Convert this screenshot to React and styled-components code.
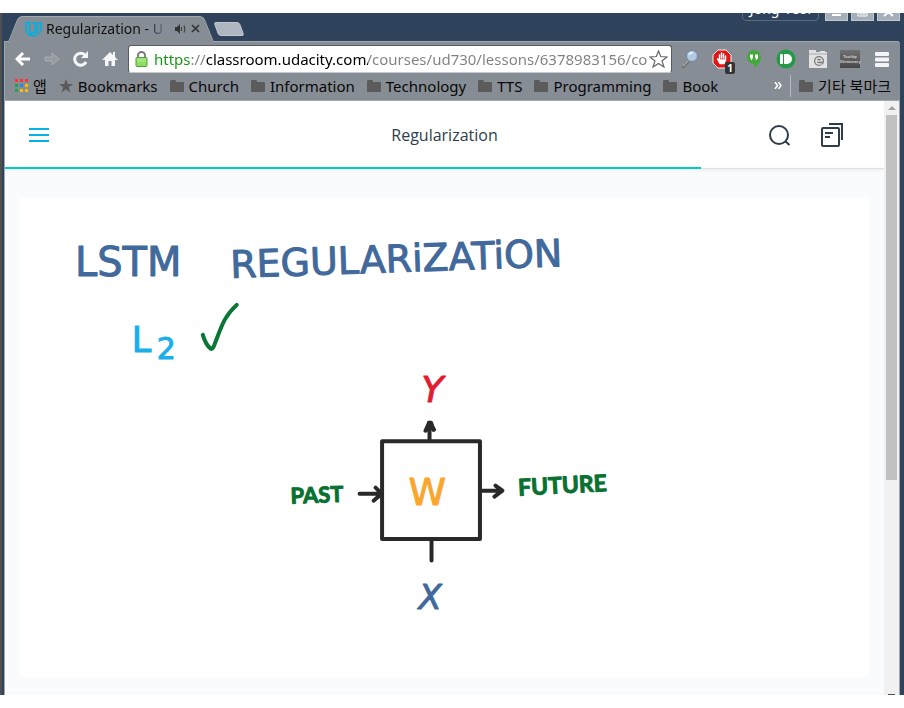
import React from "react";
import styled, { createGlobalStyle, css } from "styled-components";

const uiFont = `"Noto Sans", "Noto Sans CJK KR", sans-serif`;

const GlobalStyle = createGlobalStyle`
  * { box-sizing: border-box; }
  html, body, #root { height: 100%; }
  body { margin: 0; background: #fff; font-family: ${uiFont}; overflow: hidden; }
  button { font: inherit; border: 0; padding: 0; background: none; color: inherit; cursor: pointer; }
  svg { display: block; flex: none; }
`;

const Screen = styled.div`
  height: 100vh;
  padding: 13px 0;
  display: flex;
  flex-direction: column;
`;

const BrowserWindow = styled.div`
  flex: 1;
  min-height: 0;
  display: flex;
  flex-direction: column;
  background: #30435d;
  border-left: 2px solid #4f5052;
  padding: 0 4px 0 2px;
`;

const TitleBar = styled.header`
  height: 28px;
  display: flex;
  align-items: flex-end;
  padding-left: 6px;
`;

const Tab = styled.div`
  position: relative;
  width: 202px;
  height: 25px;
  padding: 0 12px 0 15px;
  display: flex;
  align-items: center;
  isolation: isolate;
  &::before,
  &::after {
    content: "";
    position: absolute;
    z-index: -1;
    top: 0;
    bottom: -1px;
    background: #878d94;
    border-top: 1px solid #a4a9af;
  }
  &::before {
    left: 3px;
    right: 50%;
    transform: skewX(-22deg);
    border-left: 1px solid #a4a9af;
    border-top-left-radius: 5px;
  }
  &::after {
    left: 45%;
    right: 3px;
    transform: skewX(22deg);
    border-right: 1px solid #a4a9af;
    border-top-right-radius: 5px;
  }
`;

const TabTitle = styled.span`
  flex: 1;
  margin-left: 4px;
  white-space: nowrap;
  font-size: 14px;
  line-height: 22px;
  color: #111;
  mask-image: linear-gradient(to right, #000 80%, transparent);
`;

const TabButton = styled.button`
  margin-left: 5px;
`;

const NewTab = styled.button`
  width: 26px;
  height: 14px;
  margin: 0 auto 5px 4px;
  background: #aeb6bf;
  border: 1px solid #c3c9d0;
  border-radius: 3px;
  transform: skewX(20deg);
`;

const WindowControls = styled.div`
  align-self: flex-start;
  height: 8px;
  overflow: hidden;
  display: flex;
  align-items: flex-end;
  gap: 3px;
`;

const UserButton = styled.button`
  width: 77px;
  height: 24px;
  margin-right: 3px;
  border: 1px solid #5b6a80;
  border-radius: 4px;
  color: #fff;
  font-size: 14px;
  line-height: 22px;
  white-space: nowrap;
`;

const WindowButton = styled.button`
  width: 23px;
  height: 20px;
  display: flex;
  align-items: flex-end;
  justify-content: center;
  background: #a5afba;
  border: 1px solid #c1c8cf;
`;

const Toolbar = styled.div`
  background: #878d94;
  border-top: 1px solid #a1a6ac;
  border-left: 1px solid #a1a6ac;
  border-top-right-radius: 3px;
`;

const NavRow = styled.div`
  height: 32px;
  display: flex;
  align-items: center;
  padding: 2px 7px 0 8px;
`;

const NavButton = styled.button`
  width: 20px;
  height: 20px;
  margin-right: 9px;
  display: grid;
  place-items: center;
`;

const AddressBar = styled.form`
  flex: 1;
  min-width: 0;
  height: 28px;
  margin-left: -1px;
  padding: 0 3px 0 6px;
  display: flex;
  align-items: center;
  background: #fff;
  border: 1px solid #555c64;
  border-bottom-color: #c6cacd;
  border-radius: 3px;
`;

const AddressInput = styled.input`
  flex: 1;
  min-width: 0;
  height: 24px;
  margin-left: 6px;
  padding: 0;
  border: 0;
  outline: 0;
  font: 15px/24px ${uiFont};
  color: transparent;
  background: linear-gradient(
    to right,
    #149414 0 37px,
    #808080 37px 52px,
    #000 52px 214px,
    #808080 214px
  );
  background-clip: text;
  -webkit-background-clip: text;
`;

const Extensions = styled.div`
  display: flex;
  gap: 10px;
  margin-left: 7px;
`;

const ExtensionButton = styled.button`
  position: relative;
  width: 22px;
  height: 22px;
  display: grid;
  place-items: center;
`;

const Badge = styled.span`
  position: absolute;
  right: -2px;
  bottom: -4px;
  width: 10px;
  height: 12px;
  border-radius: 2px;
  background: #333;
  color: #fff;
  font-size: 10px;
  font-weight: 700;
  line-height: 12px;
  text-align: center;
`;

const DictionaryLabel = styled.span`
  width: 20px;
  height: 18px;
  background: linear-gradient(#707070, #484848);
  color: #ccc;
  font-size: 4px;
  font-weight: 700;
  line-height: 5px;
  text-align: center;
  padding-top: 4px;
`;

const BookmarksBar = styled.nav`
  height: 26px;
  display: flex;
  align-items: center;
  gap: 12px;
  padding: 0 9px 3px 10px;
  color: #080808;
  font-size: 15px;
  line-height: 22px;
`;

const Bookmark = styled.a`
  display: flex;
  align-items: center;
  gap: 5px;
  color: inherit;
  text-decoration: none;
  white-space: nowrap;
  ${(p) => p.$trailing && css`
    height: 22px;
    padding-left: 8px;
    margin-left: -4px;
    border-left: 1px solid #b5babf;
  `}
`;

const MoreButton = styled.button`
  margin-left: auto;
`;

const Viewport = styled.div`
  flex: 1;
  min-height: 0;
  display: flex;
  border: solid #a5a7aa;
  border-width: 1px 1px 0;
`;

const Page = styled.main`
  flex: 1;
  min-width: 0;
  overflow: hidden;
  background: #fafbfd;
`;

const LessonHeader = styled.header`
  height: 66px;
  display: grid;
  grid-template-columns: 1fr auto 1fr;
  align-items: center;
  padding: 2px 24px 0;
  background: #fff;
`;

const LessonTitle = styled.h1`
  margin: 0;
  font: 400 16px/24px "Open Sans", sans-serif;
  color: #2e3d49;
`;

const MenuButton = styled.button`
  width: 20px;
  height: 14px;
  border: solid #02b3e4;
  border-width: 2px 0;
  display: flex;
  align-items: center;
  &::before {
    content: "";
    width: 100%;
    height: 2px;
    background: #02b3e4;
  }
`;

const HeaderActions = styled.div`
  justify-self: end;
  display: flex;
  gap: 29px;
  margin-right: 16px;
`;

const Progress = styled.div`
  height: 2px;
  background: linear-gradient(#fff 50%, #dbe2e8 50%);
  box-shadow: 0 1px 3px rgba(46, 61, 73, 0.12);
`;

const ProgressFill = styled.div`
  width: ${(p) => p.$value}%;
  height: 100%;
  background: #02ccba;
`;

const Slide = styled.section`
  margin: 29px 15px 17px;
  background: #fff;
  border-radius: 2px;
`;

const Sketch = styled.svg`
  width: 100%;
  height: auto;
  text {
    font-family: "DejaVu Sans", sans-serif;
    fill: currentColor;
    stroke: currentColor;
    stroke-width: 1;
    stroke-linejoin: round;
  }
`;

const SketchLabels = styled.g`
  color: #08712f;
  font-weight: 700;
  text { font-family: Lato, sans-serif; }
`;

const Scrollbar = styled.div`
  width: 15px;
  flex: none;
  display: flex;
  flex-direction: column;
  align-items: center;
  background: #f1f1f1;
  overflow: hidden;
`;

const ScrollArrow = styled.button`
  height: 14px;
  flex: none;
  display: grid;
  place-items: center;
`;

const ScrollTrack = styled.div`
  flex: 1;
  width: 11px;
`;

const ScrollThumb = styled.div`
  height: 63%;
  background: #c1c1c1;
`;

const ScrollEnd = styled.div`
  width: 7px;
  height: 1px;
  background: #505050;
`;

const Folder = () => (
  <svg width="14" height="12" viewBox="0 0 14 12" fill="#5b5b5b">
    <path d="M0 2Q0 0 1 0H5Q6 0 6 2H13Q14 2 14 3V11Q14 12 13 12H1Q0 12 0 11Z" />
  </svg>
);

const Star = () => (
  <svg width="14" height="14" viewBox="0 0 14 14" fill="#5b5b5b">
    <path d="M7 0L8.8 5H14L9.8 8.2L11.4 13.4L7 10.3L2.6 13.4L4.2 8.2L0 5H5.2Z" />
  </svg>
);

const appColors = ["#f33", "#f33", "#f33", "#2a9d4e", "#2188f5", "#fb0", "#2a9d4e", "#fb0", "#fb0"];
const Apps = () => (
  <svg width="13" height="13" viewBox="0 0 13 13">
    {appColors.map((color, i) => (
      <rect key={i} x={(i % 3) * 5} y={Math.floor(i / 3) * 5} width="3" height="3" fill={color} />
    ))}
  </svg>
);

const Udacity = () => (
  <svg width="17" height="16" viewBox="0 0 17 16" fill="none" stroke="#04afe1" strokeWidth="1.7" strokeLinejoin="round">
    <path d="M1 2L4.5 1V8.5Q4.5 11 7 12Q5.500 14.500 4 13.500Q1 11.500 1 8Z" />
    <path d="M16 1.500L12.500 2.500V8.500Q12 12 7 12Q6 14 5 14.500Q10 16 13.500 12.500Q16 10 16 7ZM7.500 2.500L10 1.500V9Q10 11 8 12" />
  </svg>
);

const bookmarks = ["Church", "Information", "Technology", "TTS", "Programming", "Book"];

function Diagram() {
  return (
    <Sketch viewBox="20 198 850 480" role="img" aria-label="LSTM regularization diagram">
      <g color="#41699c">
        <text x="75" y="276" fontSize="40">LSTM</text>
        <text x="231" y="278" fontSize="38" transform="rotate(-2 231 278)">REGULARiZATiON</text>
        <text x="419" y="609" fontSize="34" fontStyle="italic">X</text>
      </g>
      <g color="#1aaeea">
        <text x="132" y="352" fontSize="35">L</text>
        <text x="157" y="359" fontSize="30">2</text>
      </g>
      <text x="422" y="402" fontSize="36" color="#e31b32" fontStyle="italic">Y</text>
      <text x="409" y="505" fontSize="38" color="#faa62d">W</text>
      <SketchLabels>
        <text x="291" y="504" fontSize="22" transform="rotate(-2 291 504)">PAST</text>
        <text x="519" y="496" fontSize="23" transform="rotate(-3 519 496)">FUTURE</text>
      </SketchLabels>
      <path d="M203 335Q206 345 211 349Q213 350 215 344C222 326 224 317 237 305" fill="none" stroke="#087634" strokeWidth="4" strokeLinecap="round" strokeLinejoin="round" />
      <g fill="none" stroke="#292929" strokeWidth="4" strokeLinecap="round" strokeLinejoin="round">
        <path d="M382.500 441.500H480.500V539.500H382.500Z" />
        <path d="M430 440V424M426 431L429.500 423L434.500 430M432 540V561" />
        <path d="M429.500 423H431.500L434 430M360 494H382M376 488L382 494L374 501M482 491H502M496 486L503 491L495 497" />
      </g>
    </Sketch>
  );
}

export default function App() {
  return (
    <Screen>
      <GlobalStyle />
      <BrowserWindow>
        <TitleBar>
          <Tab>
            <Udacity />
            <TabTitle>Regularization - U</TabTitle>
            <TabButton aria-label="Mute tab">
              <svg width="11" height="10" viewBox="0 0 11 10" fill="#333">
                <path d="M0 3H2L5 0V10L2 7H0Z" />
                <path d="M6.500 3V7M9 1.500Q10.500 5 9 8.500" fill="none" stroke="#444" strokeWidth="1.2" />
              </svg>
            </TabButton>
            <TabButton aria-label="Close tab">
              <svg width="9" height="9" viewBox="0 0 9 9" stroke="#333" strokeWidth="1.700">
                <path d="M1 1L8 8M8 1L1 8" />
              </svg>
            </TabButton>
          </Tab>
          <NewTab aria-label="New tab" />
          <WindowControls>
            <UserButton>Jong-Yeol</UserButton>
            <WindowButton aria-label="Minimize">
              <svg width="11" height="6"><path d="M1 1H10" stroke="#fff" strokeWidth="2" /></svg>
            </WindowButton>
            <WindowButton aria-label="Maximize">
              <svg width="11" height="12" fill="none" stroke="#fff"><path d="M1 1H10V8H1ZM3 3H8V6H3Z" /></svg>
            </WindowButton>
            <WindowButton aria-label="Close">
              <svg width="11" height="12" stroke="#fff" strokeWidth="2"><path d="M1 0L10 8M10 0L1 8" /></svg>
            </WindowButton>
          </WindowControls>
        </TitleBar>

        <Toolbar>
          <NavRow>
            <NavButton aria-label="Back">
              <svg width="16" height="14" viewBox="0 0 16 14" fill="none" stroke="#fff" strokeWidth="3"><path d="M15 7H3M8 1L2 7L8 13" /></svg>
            </NavButton>
            <NavButton aria-label="Forward">
              <svg width="16" height="14" viewBox="0 0 16 14"><path d="M1 5H8V1L15 7L8 13V9H1Z" fill="#969ba1" stroke="#a8adb2" /></svg>
            </NavButton>
            <NavButton aria-label="Reload">
              <svg width="16" height="16" viewBox="0 0 16 16"><path d="M13 11A6 6 0 1 1 12 4" fill="none" stroke="#f5f6f7" strokeWidth="3" /><path d="M15 0V7H8Z" fill="#f5f6f7" /></svg>
            </NavButton>
            <NavButton aria-label="Home">
              <svg width="16" height="16" viewBox="0 0 16 16" fill="#f5f6f7"><path d="M8 1L11 4V1H13V6L16 9H13V15H9.500V10H6.500V15H3V9H0Z" /></svg>
            </NavButton>
            <AddressBar onSubmit={(e) => e.preventDefault()}>
              <svg width="13" height="16" viewBox="0 0 13 16">
                <path d="M3 7V4A3.500 3 0 0 1 10 4V7" fill="none" stroke="#777" strokeWidth="1.800" />
                <rect x="1" y="6.500" width="11" height="9" rx="1" fill="#8cdd62" stroke="#579d3d" />
                <path d="M2 8H11M2 10H11" stroke="#b4ee96" />
              </svg>
              <AddressInput aria-label="Address" defaultValue="https://classroom.udacity.com/courses/ud730/lessons/6378983156/co" />
              <button type="button" aria-label="Bookmark this page">
                <svg width="19" height="18" viewBox="0 0 19 18" fill="#fff" stroke="#65686b" strokeWidth="1.200"><path d="M9.500 1L11.700 6.500L18 7L13 11L15 17L9.500 13.500L4 17L6 11L1 7L7.300 6.500Z" /></svg>
              </button>
            </AddressBar>
            <Extensions>
              <ExtensionButton aria-label="Search">
                <svg width="18" height="20" viewBox="0 0 18 20"><path d="M8 12L2 18" stroke="#777" strokeWidth="3" strokeLinecap="round" /><path d="M8 11L2 17" stroke="#bbb" /><circle cx="11" cy="7" r="5.500" fill="#b2cae1" stroke="#6d87a2" /><path d="M8 6Q9 3 12 4" stroke="#e3f0fa" fill="none" strokeWidth="2" /></svg>
              </ExtensionButton>
              <ExtensionButton aria-label="AdBlock">
                <svg width="20" height="20" viewBox="0 0 20 20"><path d="M6 1H14L19 6V14L14 19H6L1 14V6Z" fill="#e31515" stroke="#eee" /><path d="M7.500 10V6M9.500 9V4M11.500 9V5M13.500 10V7M5.500 10L8 14.500H12L13.500 11H8Z" fill="#fff" stroke="#fff" strokeWidth="1.500" strokeLinecap="round" strokeLinejoin="round" /></svg>
                <Badge>1</Badge>
              </ExtensionButton>
              <ExtensionButton aria-label="Hangouts">
                <svg width="16" height="18" viewBox="0 0 16 18"><path d="M8 0A7 7 0 0 1 15 7Q15 13 8 18V14A7 7 0 1 1 8 0Z" fill="#44a83d" /><path d="M4 4.500H7V8L5.500 10H4.500L5 8H4ZM9 4.500H12V8L10.500 10H9.500L10 8H9Z" fill="#fff" /></svg>
              </ExtensionButton>
              <ExtensionButton aria-label="Pushbullet">
                <svg width="20" height="20" viewBox="0 0 20 20"><circle cx="10" cy="10" r="9.500" fill="#249a48" /><rect x="4" y="5" width="3" height="10" rx="1" fill="#fff" /><path d="M8 5H11A5 5 0 0 1 11 15H8Z" fill="#fff" /></svg>
              </ExtensionButton>
              <ExtensionButton aria-label="Capture page">
                <svg width="18" height="18" viewBox="0 0 18 18"><path d="M0 0H7V2H11V1H16V2H18V18H0Z" fill="#e2e2e2" /><path d="M0 4H18" stroke="#aaa" /><circle cx="10" cy="11" r="5" fill="#777" /><path d="M7 11H13Q13 8 10 8Q7 8 7 11Q7 14 10 14H13" fill="none" stroke="#ddd" strokeWidth="1.500" /></svg>
              </ExtensionButton>
              <ExtensionButton aria-label="Tooltip Dictionary"><DictionaryLabel>Tooltip<br />Dictionary</DictionaryLabel></ExtensionButton>
              <ExtensionButton aria-label="Browser menu">
                <svg width="14" height="15" viewBox="0 0 14 15" fill="#f4f4f8"><rect width="14" height="4" rx="1" /><rect y="5.500" width="14" height="4" rx="1" /><rect y="11" width="14" height="4" rx="1" /></svg>
              </ExtensionButton>
            </Extensions>
          </NavRow>
          <BookmarksBar aria-label="Bookmarks">
            <Bookmark href="#apps"><Apps />앱</Bookmark>
            <Bookmark href="#bookmarks"><Star />Bookmarks</Bookmark>
            {bookmarks.map((name) => (
              <Bookmark key={name} href={`#${name}`}><Folder />{name}</Bookmark>
            ))}
            <MoreButton aria-label="More bookmarks">
              <svg width="8" height="7" viewBox="0 0 8 7" fill="none" stroke="#fff" strokeWidth="1.500"><path d="M1 0L3.500 3.500L1 7M4.500 0L7 3.500L4.500 7" /></svg>
            </MoreButton>
            <Bookmark href="#other" $trailing><Folder />기타 북마크</Bookmark>
          </BookmarksBar>
        </Toolbar>

        <Viewport>
          <Page>
            <LessonHeader>
              <MenuButton aria-label="Open menu" />
              <LessonTitle>Regularization</LessonTitle>
              <HeaderActions>
                <button aria-label="Search lesson">
                  <svg width="24" height="24" viewBox="0 0 24 24" fill="none" stroke="#2e3d49" strokeWidth="2"><circle cx="12" cy="12" r="9" /><path d="M18 18L22.500 22" /></svg>
                </button>
                <button aria-label="Resources">
                  <svg width="24" height="24" viewBox="0 0 24 24" fill="none" stroke="#2e3d49" strokeWidth="2"><rect x="2" y="5" width="17" height="18" rx="1" /><path d="M9 1H22V17M5 10H13M5 14H10" /></svg>
                </button>
              </HeaderActions>
            </LessonHeader>
            <Progress role="progressbar" aria-label="Lesson progress" aria-valuenow={79}><ProgressFill $value={79.2} /></Progress>
            <Slide><Diagram /></Slide>
          </Page>
          <Scrollbar>
            <ScrollArrow aria-label="Scroll up"><svg width="8" height="4" viewBox="0 0 8 4"><path d="M0 4L4 0L8 4Z" fill="#a2a2a2" /></svg></ScrollArrow>
            <ScrollTrack><ScrollThumb /></ScrollTrack>
            <ScrollEnd />
          </Scrollbar>
        </Viewport>
      </BrowserWindow>
    </Screen>
  );
}
